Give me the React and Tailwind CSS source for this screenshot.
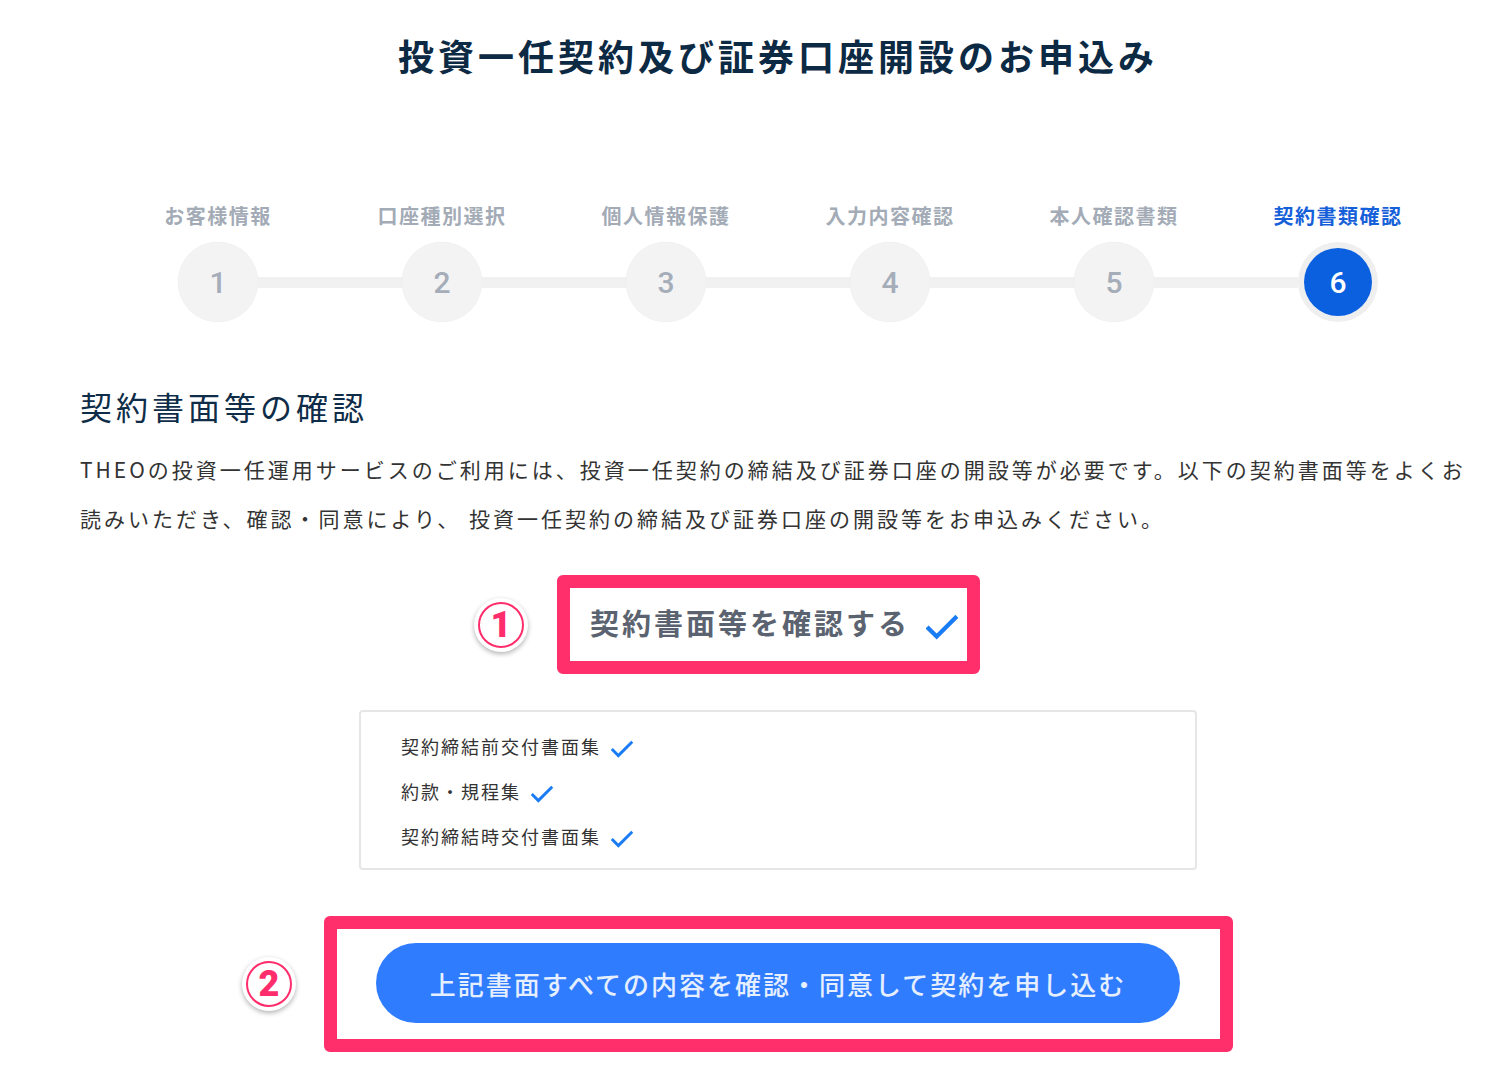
import React from 'react';

const steps = ['お客様情報', '口座種別選択', '個人情報保護', '入力内容確認', '本人確認書類', '契約書類確認'];

const documents = ['契約締結前交付書面集', '約款・規程集', '契約締結時交付書面集'];

const Check = ({ className }) => (
    <svg viewBox="0 0 30 24" className={className} fill="none">
        <polyline points="1,12 10,21 29,2" stroke="#1a7cf5" strokeWidth="4" />
    </svg>
);

const Badge = ({ n }) => (
    <div className="w-[54px] h-[54px] shrink-0 rounded-full bg-white shadow-[0_2px_5px_rgba(0,0,0,0.3)] flex items-center justify-center">
        <div className="w-[46px] h-[46px] rounded-full border-[2px] border-[#ff2d6b] flex items-center justify-center text-[36px] leading-none font-black text-[#ff2d6b] font-['Roboto',sans-serif]">
            {n}
        </div>
    </div>
);

const Stepper = () => (
    <div className="grid grid-cols-6 w-[1344px] mx-auto mt-[123px]">
        {steps.map((label, i) => {
            const active = i === steps.length - 1;
            return (
                <div key={label} className="flex flex-col items-center">
                    <div className={`text-[20px] leading-[28px] font-bold tracking-[1.5px] ${active ? 'text-[#1560d8]' : 'text-[#a3abb6]'}`}>
                        {label}
                    </div>
                    <div className="flex items-center w-full mt-[12px]">
                        <div className={`flex-1 h-[11px] ${i === 0 ? '' : 'bg-[#f1f1f1]'}`} />
                        {active ? (
                            <div className="w-[80px] h-[80px] rounded-full bg-[#efefef] flex items-center justify-center">
                                <div className="w-[68px] h-[68px] rounded-full bg-[#0b60e0] flex items-center justify-center text-white text-[30px] font-medium font-['Roboto',sans-serif]">
                                    {i + 1}
                                </div>
                            </div>
                        ) : (
                            <div className="w-[80px] h-[80px] rounded-full bg-[#f3f3f3] shadow-[0_0_1px_rgba(0,0,0,0.12)] flex items-center justify-center text-[#a5adb9] text-[30px] font-medium font-['Roboto',sans-serif]">
                                {i + 1}
                            </div>
                        )}
                        <div className={`flex-1 h-[11px] ${active ? '' : 'bg-[#f1f1f1]'}`} />
                    </div>
                </div>
            );
        })}
    </div>
);

export default function App() {
    return (
        <div className="min-h-screen bg-white font-['Noto_Sans_CJK_JP','Noto_Sans',sans-serif]">
            <div className="w-[1396px] ml-[80px] pb-[30px]">
                <h1 className="pt-[31px] text-center text-[36px] leading-[48px] font-bold tracking-[4px] text-[#0d2a44]">
                    投資一任契約及び証券口座開設のお申込み
                </h1>

                <Stepper />

                <h2 className="mt-[62px] text-[32px] leading-[44px] tracking-[4px] text-[#0f2d48]">
                    契約書面等の確認
                </h2>

                <p className="mt-[17px] text-[21px] leading-[49px] tracking-[3px] text-[#333333]">
                    THEOの投資一任運用サービスのご利用には、投資一任契約の締結及び証券口座の開設等が必要です。以下の契約書面等をよくお読みいただき、確認・同意により、 投資一任契約の締結及び証券口座の開設等をお申込みください。
                </p>

                {/* ① 契約書面の確認リンク */}
                <div className="mt-[32px] ml-[394px] flex items-center gap-[29px]">
                    <Badge n="1" />
                    <div className="w-[423px] h-[99px] border-[13px] border-[#ff2f6c] rounded-[6px] flex items-center pl-[20px] pb-[4px]">
                        <span className="text-[29px] font-bold tracking-[3px] text-[#5b6370]">契約書面等を確認する</span>
                        <Check className="w-[32px] h-[26px] ml-[16px] mt-[8px]" />
                    </div>
                </div>

                <div className="mt-[36px] mx-auto w-[838px] h-[160px] border-2 border-[#e6e6e6] rounded-[4px] pt-[12px] pl-[40px]">
                    {documents.map((doc) => (
                        <div key={doc} className="flex items-center h-[45px]">
                            <span className="text-[18px] tracking-[2px] text-[#333333]">{doc}</span>
                            <Check className="w-[22px] h-[18px] ml-[10px] mt-[4px]" />
                        </div>
                    ))}
                </div>

                {/* ② 申し込みボタン */}
                <div className="mt-[46px] ml-[162px] flex items-center gap-[28px]">
                    <Badge n="2" />
                    <div className="w-[909px] h-[136px] border-[13px] border-[#ff2f6c] rounded-[6px] pl-[39px] pt-[14px]">
                        <button className="w-[804px] h-[80px] rounded-full bg-[#2f7cff] text-[#e6efff] text-[26px] font-medium tracking-[2px]">
                            上記書面すべての内容を確認・同意して契約を申し込む
                        </button>
                    </div>
                </div>
            </div>
        </div>
    );
}
